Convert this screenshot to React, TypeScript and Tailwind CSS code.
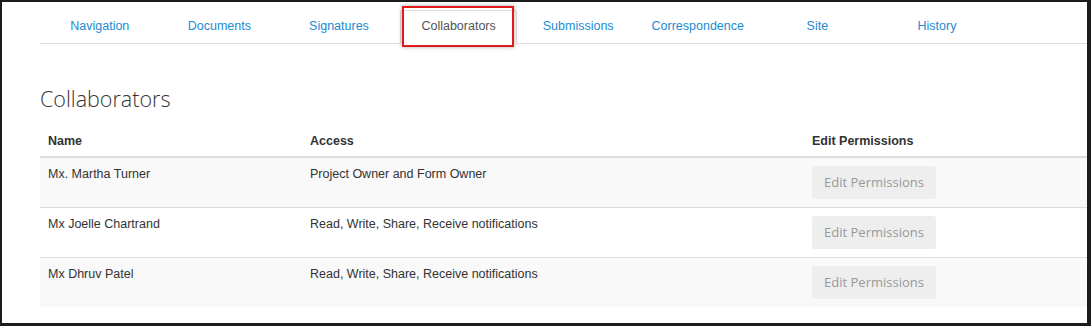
import React from 'react';

const tabs = [
  'Navigation',
  'Documents',
  'Signatures',
  'Collaborators',
  'Submissions',
  'Correspondence',
  'Site',
  'History',
];

const collaborators = [
  { name: 'Mx. Martha Turner', access: 'Project Owner and Form Owner' },
  { name: 'Mx Joelle Chartrand', access: 'Read, Write, Share, Receive notifications' },
  { name: 'Mx Dhruv Patel', access: 'Read, Write, Share, Receive notifications' },
];

export default function App() {
  return (
    <div className="w-[1091px] h-[327px] bg-white overflow-hidden">
      <div
        className="relative w-[1091px] h-[326px] border-l-2 border-t-2 border-r-[4px] border-b-[3px] border-[#1c1c1c] overflow-hidden bg-white"
        style={{ fontFamily: '"Liberation Sans", Arial, sans-serif' }}
      >
        {/* Tabs */}
        <div className="ml-[38px] mt-[8px] flex border-b border-[#dddddd] w-[1100px]">
          {tabs.map((tab) => {
            const active = tab === 'Collaborators';
            return (
              <div key={tab} className="w-[119.6px] shrink-0 flex">
                <a
                  className={`flex-1 h-[34px] pb-[1px] -mb-px mx-px flex items-center justify-center text-[12.5px] rounded-t-[3px] ${
                    active
                      ? 'bg-white border border-[#dddddd] border-b-white text-[#555555]'
                      : 'text-[#1b8bd3] border border-transparent'
                  }`}
                >
                  {tab}
                </a>
              </div>
            );
          })}
        </div>

        {/* Heading */}
        <h2
          className="ml-[38px] mt-[43px] text-[21.5px] font-light leading-[24px] text-[#333333]"
          style={{ fontFamily: '"Open Sans", sans-serif' }}
        >
          Collaborators
        </h2>

        {/* Table */}
        <table className="ml-[38px] mt-[11px] w-[1100px] text-[12.5px] text-[#333333] border-collapse">
          <thead>
            <tr className="border-b-2 border-[#dddddd]">
              <th className="w-[262px] px-2 pt-[10px] pb-[6px] text-left font-bold leading-[18px]">Name</th>
              <th className="w-[502px] px-2 pt-[10px] pb-[6px] text-left font-bold leading-[18px]">Access</th>
              <th className="px-2 pt-[10px] pb-[6px] text-left font-bold leading-[18px]">Edit Permissions</th>
            </tr>
          </thead>
          <tbody>
            {collaborators.map((c, i) => (
              <tr
                key={c.name}
                className={`${i % 2 === 0 ? 'bg-[#f9f9f9]' : 'bg-white'} ${
                  i < collaborators.length - 1 ? 'border-b border-[#dddddd]' : ''
                }`}
              >
                <td className="px-2 pt-[7px] pb-2 align-top leading-[18px]">{c.name}</td>
                <td className="px-2 pt-[7px] pb-2 align-top leading-[18px]">{c.access}</td>
                <td className="px-2 py-2 align-top">
                  <button
                    className="w-[124px] h-[33px] rounded-[3px] bg-[#eeeeee] text-[#999999] text-[13px]"
                    style={{ fontFamily: '"Open Sans", sans-serif' }}
                  >
                    Edit Permissions
                  </button>
                </td>
              </tr>
            ))}
          </tbody>
        </table>

        {/* Red annotation box around the active tab */}
        <div className="absolute left-[400px] top-[4px] w-[112px] h-[41px] border-2 border-[#e01b1b] shadow-[0_0_4px_rgba(0,0,0,0.35)]" />
      </div>
    </div>
  );
}
